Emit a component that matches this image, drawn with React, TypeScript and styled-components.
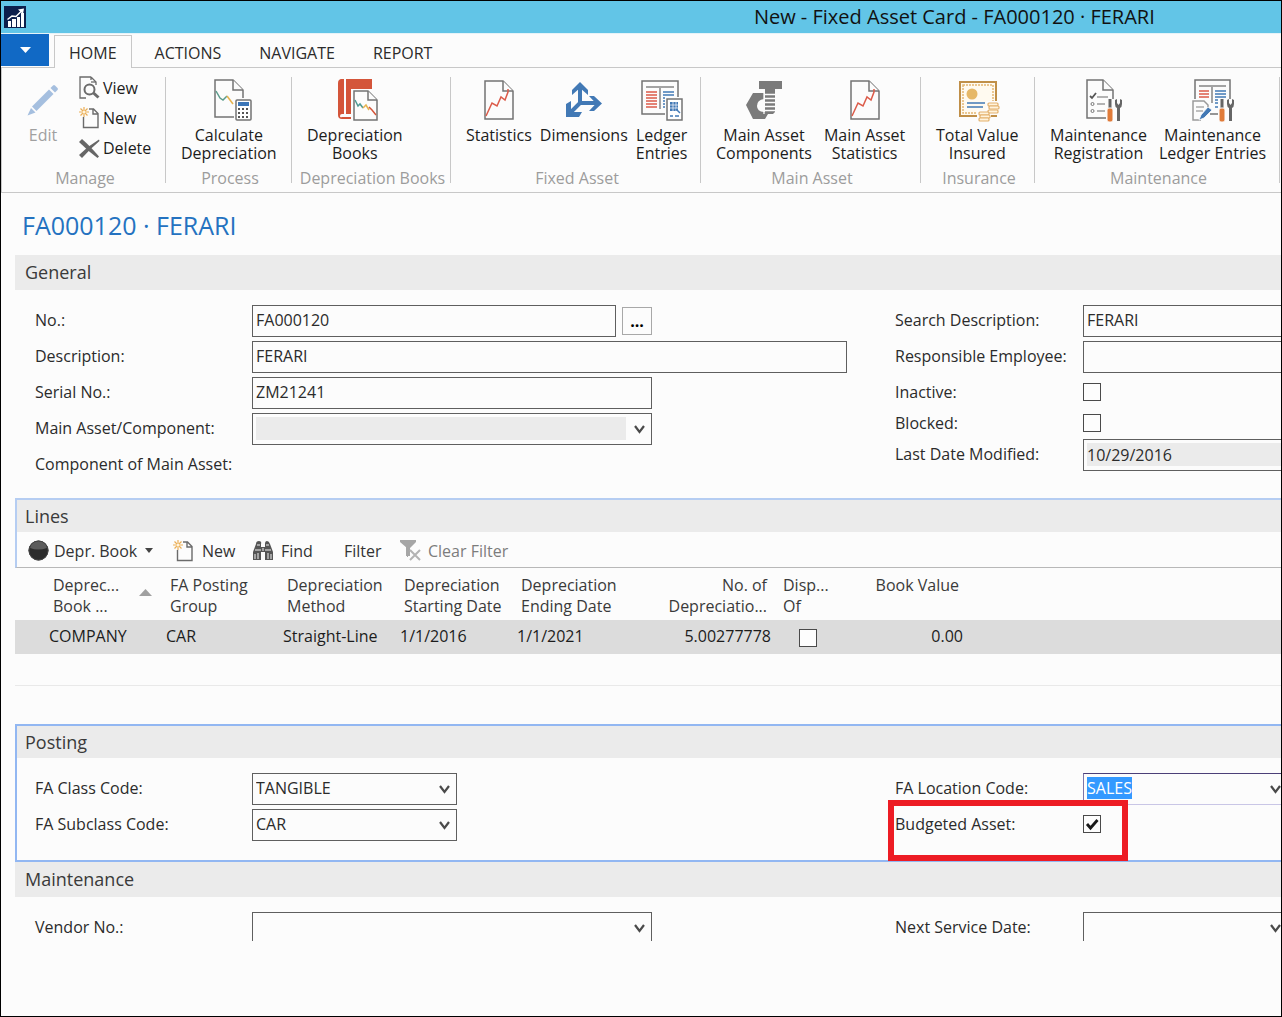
import React, { useEffect, useRef } from "react";
import styled, { createGlobalStyle } from "styled-components";

const font = '"Open Sans", "Noto Sans", sans-serif';
const ink = "#2b2b2b";
const line = "#c8c8c8";
const edge = "#5f5f5f";

const GlobalStyle = createGlobalStyle`
  *, *::before, *::after { box-sizing: border-box; }
  body { margin: 0; background: #fcfcfc; font-family: ${font}; font-size: 16px; color: ${ink}; }
  button, input, select { font: inherit; color: inherit; }
  svg { display: block; flex: none; overflow: visible; }
`;

/* ---------- window frame ---------- */

const Window = styled.div`
  min-height: 100vh;
  border: 1px solid #000;
  background: #fcfcfc;
  overflow: hidden;
`;

const TitleBar = styled.header`
  display: flex;
  align-items: center;
  height: 32px;
  padding-left: 3px;
  background: #62c5e7;
  color: #111;
  font-size: 20px;
  line-height: 24px;
  white-space: nowrap;
`;

const TitleText = styled.span`
  margin-left: 57%;
`;

const TabBar = styled.nav`
  display: flex;
  align-items: flex-end;
  height: 34px;
  border-top: 1px solid #e6f3f8;
`;

const AppMenu = styled.button`
  display: grid;
  place-items: center;
  width: 48px;
  height: 32px;
  margin-bottom: 1px;
  padding: 0;
  border: 0;
  background: #1169c5;
`;

const Tab = styled.button<{ $active?: boolean }>`
  height: 33px;
  margin: 0 ${(p) => (p.$active ? "4px" : "0")} -1px ${(p) => (p.$active ? "5px" : "0")};
  padding: 2px ${(p) => (p.$active ? "14px" : "18px")} 0;
  border: 1px solid ${(p) => (p.$active ? line : "transparent")};
  border-bottom: 0;
  background: ${(p) => (p.$active ? "#fcfcfc" : "transparent")};
  z-index: 1;
  line-height: 22px;
  white-space: nowrap;
`;

/* ---------- ribbon ---------- */

const Ribbon = styled.div`
  display: flex;
  height: 126px;
  border: 1px solid ${line};
  border-width: 1px 0 1px 1px;
`;

const Group = styled.section<{ $width: number }>`
  flex: none;
  display: flex;
  flex-direction: column;
  justify-content: space-between;
  width: ${(p) => p.$width}px;
  height: 106px;
  margin-top: 9px;
  padding-left: 3px;
  border-right: 1px solid ${line};
`;

const GroupBody = styled.div<{ $gap: number }>`
  display: flex;
  gap: ${(p) => p.$gap}px;
  padding: 2px 0 0 12px;
`;

const GroupCaption = styled.h3`
  margin: 0 0 -3px;
  color: #9c9c9c;
  font-size: 16px;
  font-weight: 400;
  line-height: 16px;
  text-align: center;
  white-space: nowrap;
`;

const BigButton = styled.button`
  display: flex;
  flex-direction: column;
  align-items: center;
  padding: 0;
  border: 0;
  background: transparent;
  color: #1c1c1c;
  line-height: 18px;
  white-space: pre;

  &:disabled { color: #a0a0a0; }
`;

const IconSlot = styled.span`
  display: grid;
  place-items: center;
  height: 42px;
  margin-bottom: 5px;
`;

const ManageTools = styled.div`
  display: flex;
  gap: 20px;
  padding-left: 10px;
`;

const SmallStack = styled.div`
  display: flex;
  flex-direction: column;
  margin-top: -6px;
`;

const SmallButton = styled.button`
  display: flex;
  align-items: center;
  gap: 3px;
  height: 30px;
  padding: 0;
  border: 0;
  background: transparent;
  color: #1c1c1c;
`;

/* ---------- page ---------- */

const Page = styled.main`
  padding-left: 14px;
`;

const PageTitle = styled.h1`
  margin: 0;
  padding: 16px 0 14px 7px;
  color: #2472c0;
  font-size: 25px;
  font-weight: 400;
  line-height: 32px;
`;

const SectionTitle = styled.h2<{ $framed?: boolean }>`
  margin: 0;
  padding-left: ${(p) => (p.$framed ? 8 : 10)}px;
  background: #ebebeb;
  color: #3a3a3a;
  font-size: 18px;
  font-weight: 400;
  line-height: ${(p) => (p.$framed ? 32 : 35)}px;
`;

const Framed = styled.section<{ $color: string }>`
  border: 2px solid ${(p) => p.$color};
  border-right: 0;
`;

const LinesFrame = styled(Framed)`
  border-bottom: 1px solid #b8b8b8;
`;

const Form = styled.div<{ $framed?: boolean; $bottom: number }>`
  display: grid;
  grid-template-columns: minmax(0, 860px) minmax(0, 1fr);
  padding: 15px 0 ${(p) => p.$bottom}px ${(p) => (p.$framed ? 18 : 20)}px;
`;

const CutForm = styled(Form)`
  height: 44px;
  overflow: hidden;
`;

const Column = styled.div`
  display: flex;
  flex-direction: column;
  min-width: 0;
`;

const Row = styled.div<{ $height?: number; $side?: boolean }>`
  display: grid;
  grid-template-columns: ${(p) => (p.$side ? 188 : 217)}px minmax(0, 1fr);
  align-items: start;
  height: ${(p) => p.$height ?? 36}px;
`;

const Label = styled.label`
  line-height: 30px;
  white-space: nowrap;
`;

const Control = styled.div<{ $width: string }>`
  display: flex;
  gap: 6px;
  width: ${(p) => p.$width};
`;

const TextBox = styled.input<{ $shaded?: boolean }>`
  flex: 1;
  min-width: 0;
  height: 32px;
  padding: ${(p) => (p.$shaded ? "3px 3px 4px" : "0 3px 2px")};
  border: 1px solid ${edge};
  border-radius: 0;
  background: ${(p) => (p.$shaded ? "#ebebeb content-box" : "#fcfcfc")};
  outline: 0;
`;

const AssistButton = styled.button`
  width: 30px;
  height: 28px;
  margin-top: 2px;
  padding: 0;
  border: 1px solid #a8a8a8;
  background: #fcfcfc;
  color: #000;
  font-weight: 700;
  line-height: 24px;
`;

const DropBox = styled.div<{ $focused?: boolean }>`
  flex: 1;
  display: grid;
  grid-template-columns: minmax(0, 1fr) 17px;
  align-items: center;
  height: 32px;
  border: 1px solid ${(p) => (p.$focused ? "#c9c6e6" : edge)};
  border-top-color: ${(p) => (p.$focused ? "#4b3f78" : edge)};
  border-left-color: ${(p) => (p.$focused ? "#7d76a8" : edge)};

  & > select, & > input { grid-area: 1 / 1 / 2 / 3; }
  & > svg { grid-area: 1 / 2; pointer-events: none; }
`;

const Select = styled.select<{ $shaded?: boolean }>`
  appearance: none;
  width: 100%;
  height: 30px;
  padding: ${(p) => (p.$shaded ? "3px 25px 4px 3px" : "0 20px 2px 3px")};
  border: 0;
  border-radius: 0;
  background: ${(p) => (p.$shaded ? "#ebebeb content-box" : "transparent")};
  outline: 0;
`;

const ComboInput = styled.input`
  width: 100%;
  height: 30px;
  padding: 0 20px 2px 3px;
  border: 0;
  background: transparent;
  outline: 0;

  &::selection { background: #3399ff; color: #fff; }
`;

const CheckBox = styled.span`
  display: grid;
  width: 18px;
  height: 18px;
  margin-top: 6px;

  & > * { grid-area: 1 / 1; }
  & > svg { pointer-events: none; }
`;

const Tick = styled.input`
  appearance: none;
  width: 18px;
  height: 18px;
  margin: 0;
  border: 1px solid #4a4a4a;
  background: #fdfdfd;
`;

const BudgetRow = styled(Row)`
  position: relative;
`;

const Highlight = styled.span`
  position: absolute;
  top: -9px;
  left: -7px;
  width: 240px;
  height: 61px;
  border: 6px solid #ed1c24;
  pointer-events: none;
`;

/* ---------- lines ---------- */

const Toolbar = styled.div`
  display: grid;
  grid-template-columns: 145px 79px 92px 56px auto;
  align-items: center;
  height: 35px;
  padding: 2px 0 0 11px;
`;

const ToolButton = styled.button<{ $gap: number }>`
  display: flex;
  align-items: center;
  gap: ${(p) => p.$gap}px;
  padding: 0;
  border: 0;
  background: transparent;
  color: #333;
  white-space: nowrap;

  &:disabled { color: #7c7c7c; }
`;

const MenuCaret = styled.span`
  padding-left: 3px;
`;

const Table = styled.table`
  width: 100%;
  border-collapse: collapse;
  table-layout: fixed;
`;

const HeadCell = styled.th<{ $right?: boolean }>`
  height: 52px;
  padding: 7px 8px 0;
  color: #3a3a3a;
  font-weight: 400;
  line-height: 21px;
  text-align: ${(p) => (p.$right ? "right" : "left")};
  vertical-align: top;
  white-space: pre;
`;

const SortHead = styled.div`
  display: flex;
  justify-content: space-between;

  & > svg { margin: 14px 2px 0 0; }
`;

const Cell = styled.td<{ $right?: boolean }>`
  height: 34px;
  padding: 0 4px 2px;
  background: #dcdcdc;
  color: #1c1c1c;
  text-align: ${(p) => (p.$right ? "right" : "left")};
  white-space: nowrap;

  & > ${CheckBox} { margin: 3px auto 0; }
`;

const TableEnd = styled.div`
  height: 32px;
  margin-bottom: 38px;
  border-bottom: 1px solid #e9e9e9;
`;

/* ---------- drawings ---------- */

const G = "#737373";

const Sheet = ({ w = 28, h = 38, f = 9, fill = "#fcfcfc", sw = 1.5 }) => (
  <g fill={fill} stroke={G} strokeWidth={sw}>
    <path d={`M1 1H${w - f}L${w} ${f + 1}V${h}H1Z`} />
    <path d={`M${w - f} 1V${f + 1}H${w}`} />
  </g>
);

const LogoIcon = () => (
  <svg width="22" height="22" viewBox="0 0 22 22">
    <rect width="22" height="22" fill="#0c1f4c" />
    <g fill="#fff">
      <rect x="4" y="15" width="3" height="6" />
      <rect x="8" y="13" width="4" height="8" />
      <rect x="13" y="11" width="3" height="10" />
      <rect x="17" y="7" width="3" height="14" />
      <path d="M14 3.500L20 2.500L19 8Z" />
    </g>
    <path d="M3.500 13.500L8 10L12 10.500L18 4.500" fill="none" stroke="#fff" strokeWidth="1.500" />
  </svg>
);

const PencilIcon = () => (
  <svg width="32" height="32" viewBox="0 0 32 32" fill="#a5bfdf">
    <path d="M5 22.500L22 5.500L26.500 10L9.500 27Z" />
    <path d="M23.500 4L26 1.500Q27 0.500 28 1.500L30.500 4Q31.500 5 30.500 6L28 8.500Z" />
    <path d="M4 24L8.500 28.500L0.500 31.500Z" />
  </svg>
);

const ViewIcon = () => (
  <svg width="21" height="24" viewBox="0 0 21 24" fill="none" stroke="#6b6b6b" strokeWidth="1.300">
    <path d="M7 22H1V1H12M12 1V4M12 1L17 6V9" />
    <path d="M12 6H17" />
    <circle cx="10.500" cy="13.500" r="5" strokeWidth="2" />
    <path d="M14.500 17L19.500 21.500" strokeWidth="3" />
  </svg>
);

const NewIcon = () => (
  <svg width="21" height="22" viewBox="0 0 21 22" fill="none">
    <path d="M4.500 10V20.500H19V6.500L14.500 2H10M14 2V7H19" stroke="#6b6b6b" strokeWidth="1.400" />
    <path d="M5 0V10M0 5H10M1.500 1.500L8.500 8.500M8.500 1.500L1.500 8.500" stroke="#ebae55" strokeWidth="1.200" />
    <circle cx="5" cy="5" r="1.500" fill="#fff5df" />
  </svg>
);

const DeleteIcon = () => (
  <svg width="21" height="19" viewBox="0 0 21 19" fill="#666">
    <path d="M0 3L3 0Q11 7 20 17.500L18.500 19Q9 12 0 3Z" />
    <path d="M20 0.500L20.500 2Q11 10 3 19L0 16Q9 7 20 0.500Z" />
  </svg>
);

const CalculateIcon = () => (
  <svg width="46" height="42" viewBox="-8 0 46 42" fill="none">
    <Sheet w={29} h={38} f={10} />
    <path d="M2 12L6 19L9 21L13 17" stroke="#5c9c8c" strokeWidth="1.500" />
    <path d="M13 17L16 21L19 25" stroke="#e6b34f" strokeWidth="1.500" />
    <rect x="20" y="19" width="19" height="24" fill="#fcfcfc" />
    <rect x="22" y="21" width="15" height="20" rx="1" fill="#fff" stroke={G} strokeWidth="1.500" />
    <rect x="24" y="23" width="11" height="4" fill="#3c76b8" />
    <g fill="#555">
      {[29, 33, 37].map((y) => [24, 28, 32].map((x) => <rect key={`${x}-${y}`} x={x} y={y} width="2" height="2" />))}
    </g>
  </svg>
);

const BooksIcon = () => (
  <svg width="46" height="42" viewBox="-6 0 46 42" fill="none">
    <path d="M4 0H6V35H4Q2 35 2 37T4 38H15V40H4Q0 40 0 36V4Q0 0 4 0Z" fill="#d4553a" />
    <path d="M2 2V35H6V0H4Q2 0 2 2Z" fill="#d4553a" />
    <path d="M8 0H34V10H14V35H8Z" fill="#d4553a" />
    <rect x="13" y="10" width="27" height="32" fill="#fcfcfc" />
    <g transform="translate(15 11)">
      <Sheet w={24} h={30} f={9} sw={1.5} />
      <path d="M2 10L5 16L7 14L10 18" stroke="#4f9a94" strokeWidth="1.500" />
      <path d="M10 18L13 15L16 20" stroke="#e6b34f" strokeWidth="1.500" />
      <path d="M16 17L19 20L23 25" stroke="#d4553a" strokeWidth="1.500" />
    </g>
  </svg>
);

const StatisticsIcon = () => (
  <svg width="30" height="40" viewBox="0 0 30 40" fill="none">
    <Sheet w={29} h={39} f={10} />
    <path d="M2 36L8 23L13 26L17 17L21 20L24 12V9" stroke="#dc5b49" strokeWidth="1.500" />
  </svg>
);

const DimensionsIcon = () => (
  <svg width="36" height="36" viewBox="0 0 36 36" fill="none">
    <g stroke="#4279b5" strokeWidth="4">
      <path d="M14 4V21H31M14 21L5 30" />
    </g>
    <g fill="#4279b5">
      <path d="M14 0L22 8V13L14 6L6 13V8Z" />
      <path d="M36 21.500L28 29H23L30 21.500L23 14H28Z" />
      <path d="M0 22L5 19V30H16L13 35H0Z" />
    </g>
  </svg>
);

const LedgerIcon = () => (
  <svg width="42" height="41" viewBox="0 0 42 41" fill="none">
    <rect x="1" y="1" width="36" height="33" fill="#fcfcfc" stroke={G} strokeWidth="1.500" />
    <path d="M5 7H33M19 7V29" stroke="#a3a3a3" strokeWidth="2" />
    <path d="M5 12H16M5 15H16M5 18H16M5 21H16M5 24H16M5 27H16" stroke="#dc5b49" strokeWidth="1.500" />
    <path d="M22 12H33M22 15H33M22 18H33M22 21H33M22 24H33M22 27H33" stroke="#4279b5" strokeWidth="1.500" />
    <rect x="24" y="17" width="19" height="25" fill="#fcfcfc" />
    <rect x="26" y="19" width="15" height="21" fill="#fff" stroke={G} strokeWidth="1.500" />
    <path d="M29 22H37V31H29Z" fill="#4279b5" />
    <path d="M32 22V31M35 22V31M29 25H37M29 28H37" stroke="#fff" strokeWidth="0.700" />
    <path d="M35 29L39 33M29 36H32M34 36H38" stroke="#4279b5" strokeWidth="1.500" />
  </svg>
);

const BoltIcon = () => (
  <svg width="36" height="38" viewBox="0 0 36 38" fill="#7b7b7b">
    <path d="M7 12H18V18Q11 19 11 25T19 31L22 33L19 38H7L0 24Z" />
    <path d="M13 0H36V8H29V12H19V8H13Z" />
    <path d="M19 12H29V31L27 33H19Z" />
    <path d="M19 13.500H29M19 17.500H29M19 21.500H29M19 25.500H29M19 29.500H29" stroke="#fcfcfc" strokeWidth="1.300" />
    <path d="M18 10V33" stroke="#fcfcfc" strokeWidth="1.300" />
  </svg>
);

const InsuranceIcon = () => (
  <svg width="51" height="42" viewBox="-6 0 51 42" fill="none">
    <rect x="2" y="3" width="36" height="34" fill="#fffaf0" stroke="#c08f48" strokeWidth="2" />
    <rect x="5" y="6" width="30" height="28" stroke="#e3b773" strokeWidth="1.500" strokeDasharray="2 1" />
    <circle cx="14" cy="15" r="5.500" fill="#e6b868" />
    <path d="M9 24H27M9 28H25" stroke="#4279b5" strokeWidth="1.500" />
    <path d="M28 22H43V36H33V42H19V31H28Z" fill="#fcfcfc" />
    <g fill="#fff3dc" stroke="#e3b06a" strokeWidth="1.200">
      <rect x="30" y="24" width="10" height="3" rx="1" />
      <rect x="31" y="27" width="10" height="3" rx="1" />
      <rect x="30" y="31" width="10" height="3" rx="1" />
      <rect x="21" y="33" width="10" height="3" rx="1" />
      <rect x="22" y="36" width="10" height="3" rx="1" />
      <rect x="21" y="39" width="10" height="3" rx="1" />
    </g>
  </svg>
);

const Tools = () => (
  <g>
    <path d="M4 0V10" stroke="#666" strokeWidth="3" />
    <rect x="1" y="9" width="6" height="14" rx="2" fill="#e07b39" stroke="#fcfcfc" />
    <path d="M9 1V5Q9 8 11 9V22H14V9Q16 8 16 5V1L14 0V4L12.500 6L11 4V0Z" fill="#666" />
  </g>
);

const RegistrationIcon = () => (
  <svg width="48" height="42" viewBox="-12 0 48 42" fill="none">
    <Sheet w={27} h={39} f={10} />
    <path d="M4 17L6 19L10 14" stroke="#555" strokeWidth="1.800" />
    <path d="M11 18H22M11 25H19M11 32H19" stroke="#9a9a9a" strokeWidth="1.500" />
    <circle cx="6.500" cy="25" r="1.500" stroke="#777" />
    <circle cx="6.500" cy="32" r="1.500" stroke="#777" />
    <rect x="20" y="20" width="17" height="22" fill="#fcfcfc" />
    <g transform="translate(20 20)"><Tools /></g>
  </svg>
);

const MaintLedgerIcon = () => (
  <svg width="42" height="42" viewBox="0 0 42 42" fill="none">
    <g transform="translate(2 0)">
      <rect x="1" y="1" width="35" height="34" fill="#fcfcfc" stroke={G} strokeWidth="1.500" />
      <path d="M5 7H32M18 7V24" stroke="#a3a3a3" strokeWidth="2" />
      <path d="M5 12H15M5 15H15M5 18H15" stroke="#dc5b49" strokeWidth="1.500" />
      <path d="M21 12H32M21 15H32M21 18H32M21 21H29M21 24H24M21 28H24" stroke="#4279b5" strokeWidth="1.500" />
    </g>
    <rect x="0" y="20" width="18" height="22" fill="#fcfcfc" />
    <path d="M9 41H1V22H12L16 26V31" fill="#fcfcfc" stroke="#9a9a9a" strokeWidth="1.500" />
    <path d="M4 28H12M4 32H11" stroke="#aaa" strokeWidth="1.300" />
    <path d="M9 36L16 28L20 31L12 39L7 41Z" fill="#4279b5" stroke="#fcfcfc" strokeWidth="0.800" />
    <rect x="26" y="20" width="17" height="22" fill="#fcfcfc" />
    <g transform="translate(26 20)"><Tools /></g>
  </svg>
);

const SphereIcon = () => (
  <svg width="21" height="21" viewBox="0 0 21 21">
    <circle cx="10.500" cy="10.500" r="10" fill="#2c2c2c" />
    <path d="M2 8Q3 1 10.500 1T19 8Q10 11 2 8Z" fill="#5c5c5c" />
    <circle cx="10.500" cy="10.500" r="9.500" fill="none" stroke="#454545" />
  </svg>
);

const FindIcon = () => (
  <svg width="22" height="20" viewBox="0 0 22 20">
    <path d="M4 3Q4 0 7 0T9 3V6H13V3Q13 0 15 0T18 3L21 11V19H13V11H9V19H1V11Z" fill="#555" />
    <path d="M5 4H8M14 4H17M3 9H9M13 9H19M3 13V18M6 12V18M16 12V18M19 13V18M11 7V10" stroke="#f2f2f2" strokeWidth="1" fill="none" />
  </svg>
);

const ClearFilterIcon = () => (
  <svg width="21" height="21" viewBox="0 0 21 21" fill="#a6a6a6">
    <path d="M0 0H16V2L10 8V17H7V8L0 2Z" />
    <path d="M8 9H21V21H8Z" fill="#fcfcfc" />
    <path d="M6 7H10V16H6Z" />
    <path d="M10 10L20 20M20 10L10 20" stroke="#b3b3b3" strokeWidth="2" />
  </svg>
);

const Triangle = ({ w, h, color, up }: { w: number; h: number; color: string; up?: boolean }) => (
  <svg width={w} height={h} viewBox={`0 0 ${w} ${h}`}>
    <path d={up ? `M0 ${h}L${w / 2} 0L${w} ${h}Z` : `M0 0H${w}L${w / 2} ${h}Z`} fill={color} />
  </svg>
);

const Chevron = () => (
  <svg width="11" height="9" viewBox="0 0 11 9" fill="none">
    <path d="M1 1L5.500 7L10 1" stroke="#4a4a4a" strokeWidth="2.200" />
  </svg>
);

const CheckMark = () => (
  <svg width="18" height="18" viewBox="0 0 18 18" fill="none">
    <path d="M4 9L7.500 13L14.500 5" stroke="#1a1a1a" strokeWidth="2.800" />
  </svg>
);

/* ---------- composed parts ---------- */

const Action = ({ icon, label, disabled }: { icon: React.ReactNode; label: string; disabled?: boolean }) => (
  <BigButton type="button" disabled={disabled}>
    <IconSlot>{icon}</IconSlot>
    {label}
  </BigButton>
);

type RibbonGroupProps = { caption: string; width: number; gap?: number; children: React.ReactNode };

const RibbonGroup = ({ caption, width, gap = 12, children }: RibbonGroupProps) => (
  <Group $width={width}>
    <GroupBody $gap={gap}>{children}</GroupBody>
    <GroupCaption>{caption}</GroupCaption>
  </Group>
);

const Drop = ({ id, value, shaded }: { id: string; value?: string; shaded?: boolean }) => (
  <DropBox>
    <Select id={id} $shaded={shaded} defaultValue={value ?? ""}>
      <option value={value ?? ""}>{value ?? ""}</option>
    </Select>
    <Chevron />
  </DropBox>
);

const Check = ({ id, checked, label }: { id?: string; checked?: boolean; label?: string }) => {
  const [on, setOn] = React.useState(!!checked);
  return (
    <CheckBox>
      <Tick type="checkbox" id={id} aria-label={label} checked={on} onChange={(e) => setOn(e.target.checked)} />
      {on && <CheckMark />}
    </CheckBox>
  );
};

const columns = [30, 117, 117, 117, 117, 117, 145, 66, 126];

export default function App() {
  const location = useRef<HTMLInputElement>(null);

  useEffect(() => {
    location.current?.focus({ preventScroll: true });
    location.current?.select();
  }, []);

  return (
    <>
      <GlobalStyle />
      <Window>
        <TitleBar>
          <LogoIcon />
          <TitleText>New - Fixed Asset Card - FA000120 · FERARI</TitleText>
        </TitleBar>

        <TabBar>
          <AppMenu type="button" aria-label="Application menu">
            <Triangle w={11} h={6} color="#fff" />
          </AppMenu>
          <Tab type="button" $active>HOME</Tab>
          <Tab type="button">ACTIONS</Tab>
          <Tab type="button">NAVIGATE</Tab>
          <Tab type="button">REPORT</Tab>
        </TabBar>

        <Ribbon>
          <RibbonGroup caption="Manage" width={164}>
            <ManageTools>
              <Action icon={<PencilIcon />} label="Edit" disabled />
              <SmallStack>
                <SmallButton type="button"><ViewIcon />View</SmallButton>
                <SmallButton type="button"><NewIcon />New</SmallButton>
                <SmallButton type="button"><DeleteIcon />Delete</SmallButton>
              </SmallStack>
            </ManageTools>
          </RibbonGroup>
          <RibbonGroup caption="Process" width={126}>
            <Action icon={<CalculateIcon />} label={"Calculate\nDepreciation"} />
          </RibbonGroup>
          <RibbonGroup caption="Depreciation Books" width={159}>
            <Action icon={<BooksIcon />} label={"Depreciation\nBooks"} />
          </RibbonGroup>
          <RibbonGroup caption="Fixed Asset" width={250} gap={8}>
            <Action icon={<StatisticsIcon />} label="Statistics" />
            <Action icon={<DimensionsIcon />} label="Dimensions" />
            <Action icon={<LedgerIcon />} label={"Ledger\nEntries"} />
          </RibbonGroup>
          <RibbonGroup caption="Main Asset" width={220}>
            <Action icon={<BoltIcon />} label={"Main Asset\nComponents"} />
            <Action icon={<StatisticsIcon />} label={"Main Asset\nStatistics"} />
          </RibbonGroup>
          <RibbonGroup caption="Insurance" width={114}>
            <Action icon={<InsuranceIcon />} label={"Total Value\nInsured"} />
          </RibbonGroup>
          <RibbonGroup caption="Maintenance" width={245}>
            <Action icon={<RegistrationIcon />} label={"Maintenance\nRegistration"} />
            <Action icon={<MaintLedgerIcon />} label={"Maintenance\nLedger Entries"} />
          </RibbonGroup>
        </Ribbon>

        <Page>
          <PageTitle>FA000120 · FERARI</PageTitle>

          <section>
            <SectionTitle>General</SectionTitle>
            <Form $bottom={19}>
              <Column>
                <Row>
                  <Label htmlFor="no">No.:</Label>
                  <Control $width="400px">
                    <TextBox id="no" defaultValue="FA000120" />
                    <AssistButton type="button" aria-label="Assist edit">...</AssistButton>
                  </Control>
                </Row>
                <Row>
                  <Label htmlFor="description">Description:</Label>
                  <Control $width="595px"><TextBox id="description" defaultValue="FERARI" /></Control>
                </Row>
                <Row>
                  <Label htmlFor="serial">Serial No.:</Label>
                  <Control $width="400px"><TextBox id="serial" defaultValue="ZM21241" /></Control>
                </Row>
                <Row>
                  <Label htmlFor="main">Main Asset/Component:</Label>
                  <Control $width="400px"><Drop id="main" shaded /></Control>
                </Row>
                <Row $height={30}>
                  <Label as="span">Component of Main Asset:</Label>
                </Row>
              </Column>
              <Column>
                <Row $side>
                  <Label htmlFor="search">Search Description:</Label>
                  <Control $width="400px"><TextBox id="search" defaultValue="FERARI" /></Control>
                </Row>
                <Row $side>
                  <Label htmlFor="employee">Responsible Employee:</Label>
                  <Control $width="400px"><TextBox id="employee" /></Control>
                </Row>
                <Row $side $height={31}>
                  <Label htmlFor="inactive">Inactive:</Label>
                  <Check id="inactive" />
                </Row>
                <Row $side $height={31}>
                  <Label htmlFor="blocked">Blocked:</Label>
                  <Check id="blocked" />
                </Row>
                <Row $side>
                  <Label htmlFor="modified">Last Date Modified:</Label>
                  <Control $width="400px"><TextBox id="modified" $shaded readOnly defaultValue="10/29/2016" /></Control>
                </Row>
              </Column>
            </Form>
          </section>

          <LinesFrame $color="#b5cdf2">
            <SectionTitle $framed>Lines</SectionTitle>
            <Toolbar>
              <ToolButton type="button" $gap={5}>
                <SphereIcon />Depr. Book
                <MenuCaret><Triangle w={8} h={5} color="#444" /></MenuCaret>
              </ToolButton>
              <ToolButton type="button" $gap={8}><NewIcon />New</ToolButton>
              <ToolButton type="button" $gap={7}><FindIcon />Find</ToolButton>
              <ToolButton type="button" $gap={0}>Filter</ToolButton>
              <ToolButton type="button" $gap={7} disabled><ClearFilterIcon />Clear Filter</ToolButton>
            </Toolbar>
          </LinesFrame>
          <Table>
            <colgroup>
              {columns.map((w, i) => <col key={i} width={w} />)}
              <col />
            </colgroup>
            <thead>
              <tr>
                <HeadCell as="td" />
                <HeadCell>
                  <SortHead>
                    <span>{"Deprec...\nBook ..."}</span>
                    <Triangle w={13} h={7} color="#a0a0a0" up />
                  </SortHead>
                </HeadCell>
                <HeadCell>{"FA Posting\nGroup"}</HeadCell>
                <HeadCell>{"Depreciation\nMethod"}</HeadCell>
                <HeadCell>{"Depreciation\nStarting Date"}</HeadCell>
                <HeadCell>{"Depreciation\nEnding Date"}</HeadCell>
                <HeadCell $right>{"No. of\nDepreciatio..."}</HeadCell>
                <HeadCell>{"Disp...\nOf"}</HeadCell>
                <HeadCell $right>Book Value</HeadCell>
                <HeadCell as="td" />
              </tr>
            </thead>
            <tbody>
              <tr>
                <Cell />
                <Cell>COMPANY</Cell>
                <Cell>CAR</Cell>
                <Cell>Straight-Line</Cell>
                <Cell>1/1/2016</Cell>
                <Cell>1/1/2021</Cell>
                <Cell $right>5.00277778</Cell>
                <Cell><Check label="Disposed Of" /></Cell>
                <Cell $right>0.00</Cell>
                <Cell />
              </tr>
            </tbody>
          </Table>
          <TableEnd />

          <Framed $color="#92b7f2">
            <SectionTitle $framed>Posting</SectionTitle>
            <Form $framed $bottom={15}>
              <Column>
                <Row>
                  <Label htmlFor="class">FA Class Code:</Label>
                  <Control $width="205px"><Drop id="class" value="TANGIBLE" /></Control>
                </Row>
                <Row>
                  <Label htmlFor="subclass">FA Subclass Code:</Label>
                  <Control $width="205px"><Drop id="subclass" value="CAR" /></Control>
                </Row>
              </Column>
              <Column>
                <Row $side>
                  <Label htmlFor="location">FA Location Code:</Label>
                  <Control $width="205px">
                    <DropBox $focused>
                      <ComboInput id="location" role="combobox" aria-expanded="false" ref={location} defaultValue="SALES" />
                      <Chevron />
                    </DropBox>
                  </Control>
                </Row>
                <BudgetRow $side>
                  <Label htmlFor="budgeted">Budgeted Asset:</Label>
                  <Check id="budgeted" checked />
                  <Highlight />
                </BudgetRow>
              </Column>
            </Form>
          </Framed>

          <section>
            <SectionTitle>Maintenance</SectionTitle>
            <CutForm $bottom={0}>
              <Column>
                <Row>
                  <Label htmlFor="vendor">Vendor No.:</Label>
                  <Control $width="400px"><Drop id="vendor" /></Control>
                </Row>
              </Column>
              <Column>
                <Row $side>
                  <Label htmlFor="service">Next Service Date:</Label>
                  <Control $width="205px"><Drop id="service" /></Control>
                </Row>
              </Column>
            </CutForm>
          </section>
        </Page>
      </Window>
    </>
  );
}
